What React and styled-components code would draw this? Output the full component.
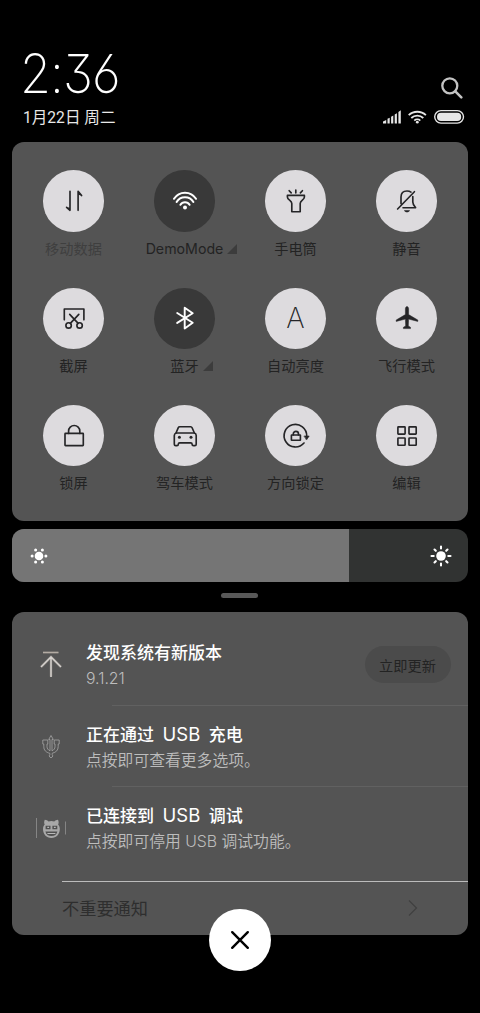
import React from "react";
import styled, { createGlobalStyle } from "styled-components";

const tiles = [
  { label: "移动数据", icon: <DataIcon />, dim: true },
  { label: "DemoMode", icon: <WifiIcon />, active: true, more: true },
  { label: "手电筒", icon: <TorchIcon /> },
  { label: "静音", icon: <MuteIcon /> },
  { label: "截屏", icon: <ScreenshotIcon /> },
  { label: "蓝牙", icon: <BluetoothIcon />, active: true, more: true },
  { label: "自动亮度", icon: <AutoIcon /> },
  { label: "飞行模式", icon: <PlaneIcon /> },
  { label: "锁屏", icon: <LockIcon /> },
  { label: "驾车模式", icon: <CarIcon /> },
  { label: "方向锁定", icon: <RotationIcon /> },
  { label: "编辑", icon: <GridIcon /> },
];

const notifications = [
  {
    id: "update",
    title: "发现系统有新版本",
    text: "9.1.21",
    icon: <UpdateIcon />,
    action: "立即更新",
  },
  {
    id: "charging",
    title: <>正在通过 <b>USB</b> 充电</>,
    text: "点按即可查看更多选项。",
    icon: <UsbIcon />,
  },
  {
    id: "debug",
    title: <>已连接到 <b>USB</b> 调试</>,
    text: "点按即可停用 USB 调试功能。",
    icon: <DebugIcon />,
  },
];

export default function App() {
  return (
    <Screen>
      <GlobalStyle />
      <Header>
        <div>
          <Clock>
            <span>2</span>
            <Colon>:</Colon>
            <span>36</span>
          </Clock>
          <DateText>1月22日 周二</DateText>
        </div>
        <HeaderRight>
          <SearchIcon />
          <StatusIcons />
        </HeaderRight>
      </Header>

      <TilePanel>
        {tiles.map((tile) => (
          <Tile key={tile.label}>
            <TileCircle $active={tile.active}>{tile.icon}</TileCircle>
            <TileLabel $dim={tile.dim}>
              {tile.label}
              {tile.more && <Corner />}
            </TileLabel>
          </Tile>
        ))}
      </TilePanel>

      <Brightness>
        <BrightnessFill>
          <SunLow />
        </BrightnessFill>
        <SunHigh />
      </Brightness>
      <Handle />

      <NotificationPanel>
        {notifications.map((item) => (
          <Notification key={item.id}>
            <NotificationIcon>{item.icon}</NotificationIcon>
            <NotificationBody>
              <Title>{item.title}</Title>
              <Text>{item.text}</Text>
            </NotificationBody>
            {item.action && <Action>{item.action}</Action>}
          </Notification>
        ))}
        <Footer>
          <span>不重要通知</span>
          <svg width="12" height="18" viewBox="0 0 12 18" fill="none" stroke="#404040" strokeWidth="1.3">
            <path d="M2 1.5 9.5 9 2 16.5" />
          </svg>
        </Footer>
      </NotificationPanel>
      <CloseButton aria-label="关闭">
        <svg width="20" height="20" viewBox="0 0 20 20" stroke="#000" strokeWidth="2.4" strokeLinecap="round">
          <path d="M2.2 2.2 17.8 17.8M17.8 2.2 2.2 17.8" />
        </svg>
      </CloseButton>
    </Screen>
  );
}

function Icon({ children }) {
  return (
    <svg
      width="32"
      height="32"
      viewBox="0 0 32 32"
      fill="none"
      stroke="currentColor"
      strokeWidth="1.65"
      strokeLinecap="round"
      strokeLinejoin="round"
    >
      {children}
    </svg>
  );
}

function DataIcon() {
  return (
    <Icon>
      <path d="M12 6.3v19L8.6 22.4M20.1 25.3v-19L23.6 10.6" />
      <path d="M12 25.3v-2.6l-3-.4zM20.1 6.3v3.4l3.2.8z" fill="currentColor" stroke="none" />
    </Icon>
  );
}

function WifiIcon() {
  return (
    <Icon>
      <g strokeWidth="2">
        <path d="M5 13.8a13 13 0 0 1 22 0M7.6 17a9.7 9.7 0 0 1 16.8 0M11.4 19.8a5.3 5.3 0 0 1 9.2 0" />
      </g>
      <circle cx="16" cy="22.6" r="2" fill="currentColor" stroke="none" />
    </Icon>
  );
}

function TorchIcon() {
  return (
    <Icon>
      <path d="M7.4 10.4h17v1.7c0 3-4.2 3.2-4.2 6.4v8.2h-8.4v-8.2c0-3.2-4.4-3.4-4.4-6.4zM15.8 5v2.9M9.2 5.7l2 2.2M22.4 5.7l-2 2.2" />
    </Icon>
  );
}

function MuteIcon() {
  return (
    <Icon>
      <path d="M23.4 6.7 6.6 24M10 18.6v-6.5C10 8.2 12.5 6 16 6c1.6 0 3 .4 4 1.1M21.8 11.5V17c0 2.3 1.2 3.6 2.8 5.7H12" />
      <path d="M13 25.2h6c-.6 1.6-1.7 2-3 2s-2.4-.4-3-2z" fill="currentColor" stroke="none" />
    </Icon>
  );
}

function ScreenshotIcon() {
  return (
    <Icon>
      <path d="M6.3 17.8V7h19.6v10.8M11.7 12.4l8.5 9M20.8 12.4l-8.5 9" />
      <circle cx="10.6" cy="23.4" r="2.7" />
      <circle cx="21.6" cy="23.4" r="2.7" />
    </Icon>
  );
}

function BluetoothIcon() {
  return (
    <Icon>
      <path d="M8.2 11l15.5 9.7-8 5.7V5.7l8 5.6L8.2 20.9" strokeWidth="1.9" />
    </Icon>
  );
}

function AutoIcon() {
  return <AutoLetter>A</AutoLetter>;
}

function PlaneIcon() {
  return (
    <Icon>
      <path
        d="M16 4.7c1 0 1.6.8 1.6 2v5.9L26.8 18v1.4l-9.2-2.3-.3 6.9 2.2 1.3v1.3h-7.1v-1.3L14.7 24l-.3-6.9-9.2 2.3V18l9.2-5.4V6.7c0-1.2.6-2 1.6-2z"
        fill="currentColor"
        strokeWidth=".5"
      />
    </Icon>
  );
}

function LockIcon() {
  return (
    <Icon>
      <rect x="7" y="13.4" width="18.3" height="12.2" rx=".5" />
      <path d="M10.6 13.4v-2.3a5.6 5.6 0 0 1 11.2 0v2.3" />
    </Icon>
  );
}

function CarIcon() {
  return (
    <Icon>
      <path d="M7 13l2.3-5.3c.3-.7.7-1 1.4-1h11c.7 0 1.1.3 1.4 1L25.4 13" />
      <path d="M7.3 13h17.8c1.3.3 2.1 1.2 2.1 2.4v8.8c0 .9-.5 1.4-1.4 1.4h-1.3c-.9 0-1.4-.5-1.4-1.4 0-.9-.5-1.4-1.4-1.4h-11c-.9 0-1.4.5-1.4 1.4 0 .9-.5 1.4-1.4 1.4H6.7c-.9 0-1.4-.5-1.4-1.4v-8.8c0-1.2.8-2.1 2-2.4z" />
      <g fill="currentColor" stroke="none">
        <circle cx="10.4" cy="17.2" r="1.5" />
        <circle cx="22" cy="17.2" r="1.5" />
      </g>
    </Icon>
  );
}

function RotationIcon() {
  return (
    <Icon>
      <path d="M26.7 16A11.3 11.3 0 1 0 24 23" />
      <path d="M24.3 16h4.9l-2.5 3.7z" fill="currentColor" strokeWidth=".6" />
      <rect x="11.4" y="15" width="9" height="5.2" rx=".3" />
      <path d="M13.3 15v-1.1a2.6 2.6 0 0 1 5.2 0V15" />
    </Icon>
  );
}

function GridIcon() {
  return (
    <Icon>
      <rect x="6.9" y="6.9" width="7.2" height="7.2" rx=".5" />
      <rect x="18" y="6.9" width="7.2" height="7.2" rx=".5" />
      <rect x="6.9" y="18" width="7.2" height="7.2" rx=".5" />
      <rect x="18" y="18" width="7.2" height="7.2" rx=".5" />
    </Icon>
  );
}

function Corner() {
  return (
    <CornerMark width="10" height="10" viewBox="0 0 10 10">
      <path d="M10 0v10H0z" fill="#3c3c3c" />
    </CornerMark>
  );
}

function SearchIcon() {
  return (
    <svg width="22" height="22" viewBox="0 0 22 22" fill="none" stroke="#c4c4c4" strokeWidth="2.3" strokeLinecap="round">
      <circle cx="8.8" cy="8.8" r="7.5" />
      <path d="M14.3 14.3l6 6" strokeWidth="2.6" />
    </svg>
  );
}

function StatusIcons() {
  return (
    <svg width="82" height="16" viewBox="0 0 82 16" fill="none" stroke="#e6e6e6">
      <path
        d="M0 14.5v-2l3.2-1.6v3.6zM4.5 14.5V9.8l2.2-1v5.7zM8.1 14.5V7.7l2.2-1.1v7.9zM11.7 14.5V5.6l2.2-1.3v10.2zM15.4 14.5V3l2.4-1.7v13.2z"
        fill="#e6e6e6"
        stroke="none"
      />
      <path d="M25.7 6.2a12.5 12.5 0 0 1 17.2 0M28.3 9a8.6 8.6 0 0 1 12 0M31.3 11.6a4.3 4.3 0 0 1 6 0" strokeWidth="1.8" />
      <circle cx="34.3" cy="13.2" r="1.4" fill="#e6e6e6" stroke="none" />
      <rect x="51.7" y="1.6" width="28.8" height="12.5" rx="6.25" strokeWidth="1.4" />
      <rect x="54" y="3.8" width="24.2" height="8.1" rx="4" fill="#e6e6e6" stroke="none" />
    </svg>
  );
}

function SunLow() {
  return (
    <svg width="18" height="18" viewBox="0 0 18 18" fill="#fff">
      <circle cx="9" cy="9" r="4.3" />
      <circle cx="2.1" cy="9" r="1.5" />
      <circle cx="15.9" cy="9" r="1.5" />
      <circle cx="5.6" cy="3" r="1.5" />
      <circle cx="12.4" cy="3" r="1.5" />
      <circle cx="5.6" cy="15" r="1.5" />
      <circle cx="12.4" cy="15" r="1.5" />
    </svg>
  );
}

function SunHigh() {
  return (
    <svg width="22" height="22" viewBox="0 0 22 22" fill="none" stroke="#fff" strokeWidth="2.1" strokeLinecap="round">
      <circle cx="11" cy="11" r="4.8" fill="#fff" stroke="none" />
      <path d="M11 1.5v2M11 18.5v2M1.5 11h2.2M18.3 11h2.2M4.5 4.5l1.3 1.3M16.2 16.2l1.3 1.3M17.5 4.5l-1.3 1.3M5.8 16.2l-1.3 1.3" />
    </svg>
  );
}

function UpdateIcon() {
  return (
    <svg width="30" height="32" viewBox="0 0 30 32" fill="none">
      <g stroke="#77736f" strokeWidth="3.2" opacity=".6">
        <path d="M7 3.5h15.5M15 27.5V8.5M5 18 15 8l10 10" />
      </g>
      <path d="M7 3.5h15.5" stroke="#b3aba3" strokeWidth="1.3" />
      <path d="M15 28V8.5M5 18 15 8l10 10" stroke="#d6d2ce" strokeWidth="1.6" />
    </svg>
  );
}

function UsbIcon() {
  return (
    <svg width="18" height="24" viewBox="0 0 18 24" fill="none" stroke="#a6a6a6" strokeWidth=".8" strokeLinejoin="round">
      <path d="M9 1.5 6.7 5.5H8v11.3c-2-.8-3-2.300-3-4.300V10h.8V6H.8v4h1v2.700c0 3.400 2 5.600 6 6.600v1.400a1.700 1.700 0 1 0 2.400 0v-1.400c4-1 6-3.200 6-6.600V10h1V6h-5v4h.8v2.500c0 2-1 3.500-3 4.300V5.500h1.300z" />
    </svg>
  );
}

function DebugIcon() {
  return (
    <svg width="32" height="24" viewBox="0 0 32 24" fill="none">
      <path d="M1.5 2v20M30.5 5.5v13" stroke="#858585" />
      <path
        d="M8 13c0-1.8.6-3.3 1.7-4.5-.8-1.6-.7-3 .1-4.8 1.500.1 2.800.8 3.700 1.800a9 9 0 0 1 5.800 0c.9-1 2.200-1.700 3.700-1.800.8 1.800.9 3.200.1 4.800 1.100 1.200 1.700 2.700 1.700 4.500 0 5-3.400 9-8.400 9S8 18 8 13z"
        fill="#a8a8a8"
      />
      <path
        d="M10.600 9.800h4.900v3.400h-4.900zM17.400 9.800h4.900v3.400h-4.900zM10.400 15.400h12c-.7 3-2.800 4.600-6 4.600s-5.300-1.600-6-4.600z"
        fill="#505050"
      />
      <path d="M12.300 11.300h1.800M18.900 11.300h1.800M12.400 17.500h8" stroke="#b8b8b8" strokeWidth="1.200" />
    </svg>
  );
}

const GlobalStyle = createGlobalStyle`
  body {
    margin: 0;
    background: #000;
  }
  * {
    box-sizing: border-box;
  }
  svg {
    display: block;
    flex: none;
  }
`;

const Screen = styled.div`
  height: 1013px;
  padding: 0 12.5px 0 12px;
  overflow: hidden;
  background: #000;
  font-family: "Inter", "Noto Sans CJK SC", sans-serif;
`;

const Header = styled.header`
  display: flex;
  justify-content: space-between;
  height: 142px;
  padding: 46px 3px 0 11px;
  color: #fff;
`;

const Clock = styled.div`
  display: flex;
  height: 59px;
  margin-left: -3px;
  font-size: 54px;
  font-weight: 250;
  line-height: 56px;
  letter-spacing: -1px;
  font-feature-settings: "cv03", "cv09";
  transform: scaleX(0.93);
  transform-origin: left;
`;

const Colon = styled.span`
  width: 14px;
  text-align: center;
`;

const DateText = styled.div`
  color: #e8e8e8;
  font-family: "Roboto", "Noto Sans CJK SC", sans-serif;
  font-size: 15.6px;
  font-weight: 400;
  line-height: 26px;
  white-space: nowrap;
`;

const HeaderRight = styled.div`
  display: flex;
  flex-direction: column;
  align-items: flex-end;
  gap: 10px;
  padding-top: 31px;

  svg:first-child {
    margin-right: 2px;
  }
`;

const TilePanel = styled.section`
  display: grid;
  grid-template-columns: repeat(4, 111px);
  grid-auto-rows: 117.3px;
  height: 379px;
  padding: 28.3px 0 0 6px;
  border-radius: 12px;
  background: #545454;
`;

const Tile = styled.div`
  display: flex;
  flex-direction: column;
  align-items: center;
`;

const TileCircle = styled.div`
  display: flex;
  align-items: center;
  justify-content: center;
  width: 61.5px;
  height: 61.5px;
  border-radius: 50%;
  background: ${(props) => (props.$active ? "#393939" : "#dddbde")};
  color: ${(props) => (props.$active ? "#fff" : "#252527")};
`;

const AutoLetter = styled.span`
  font-size: 28px;
  font-weight: 250;
  line-height: 32px;
`;

const TileLabel = styled.div`
  position: relative;
  margin-top: 6px;
  color: ${(props) => (props.$dim ? "#3f3f3f" : "#232323")};
  font-size: 14.2px;
  line-height: 21px;
  white-space: nowrap;
`;

/* hangs off the label so that the text itself stays centred */
const CornerMark = styled.svg`
  position: absolute;
  top: 6px;
  left: calc(100% + 4px);
`;

const Brightness = styled.div`
  display: flex;
  align-items: center;
  justify-content: space-between;
  height: 53px;
  margin-top: 8px;
  padding-right: 15.5px;
  border-radius: 12px;
  background: #313332;
  overflow: hidden;
`;

const BrightnessFill = styled.div`
  display: flex;
  align-items: center;
  width: 337px;
  height: 100%;
  padding-left: 18px;
  background: #757575;
`;

const Handle = styled.div`
  width: 37px;
  height: 5px;
  margin: 11px auto 14px;
  border-radius: 3px;
  background: #585858;
`;

const NotificationPanel = styled.section`
  height: 323px;
  padding-top: 12px;
  border-radius: 12px;
  background: #545454;
`;

const Notification = styled.article`
  display: flex;
  align-items: center;
  height: 81.5px;
  padding-right: 17px;
  background: linear-gradient(#616161, #616161) 100px 100% / 100% 1px no-repeat;

  &:nth-child(3) {
    background: none;
  }
`;

const NotificationIcon = styled.div`
  display: flex;
  justify-content: center;
  width: 50px;
  margin: 0 10px 0 14px;
`;

const NotificationBody = styled.div`
  flex: 1;
  padding-top: 3px;
  white-space: nowrap;
`;

const Title = styled.div`
  color: #fff;
  font-size: 17px;
  font-weight: 500;
  line-height: 26px;
  word-spacing: 4px;

  b {
    font-size: 18.5px;
    font-weight: 400;
    line-height: 1;
  }
`;

const Text = styled.div`
  color: #bdbdbd;
  font-size: 15.8px;
  font-weight: 350;
  line-height: 26px;
`;

const Action = styled.button`
  width: 86px;
  height: 37px;
  padding: 0;
  border: 0;
  border-radius: 19px;
  background: #4b4b4b;
  color: #232323;
  font-family: inherit;
  font-size: 14.2px;
`;

const Footer = styled.div`
  display: flex;
  align-items: center;
  justify-content: space-between;
  height: 53px;
  margin: 12px 0 0 50px;
  padding-right: 49px;
  border-top: 1px solid #bcbcbc;
  color: #2e2e2e;
  font-size: 17.2px;
`;

/* overlaps the lower edge of the notification panel */
const CloseButton = styled.button`
  position: absolute;
  top: 909px;
  left: 209px;
  display: flex;
  align-items: center;
  justify-content: center;
  width: 62px;
  height: 62px;
  padding: 0;
  border: 0;
  border-radius: 50%;
  background: #fff;
`;
